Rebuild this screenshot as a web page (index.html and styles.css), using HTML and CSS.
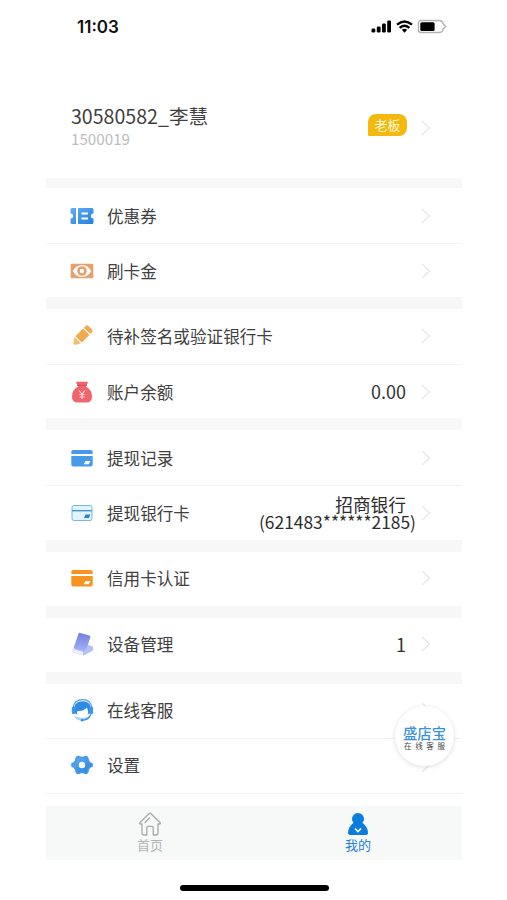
FILE: index.html
```
<!DOCTYPE html>
<html lang="zh-CN">
<head>
<meta charset="utf-8">
<title>我的</title>
<link rel="stylesheet" href="styles.css">
</head>
<body>
<svg class="defs" aria-hidden="true">
  <defs>
    <linearGradient id="blue" x1="0" y1="0" x2="1" y2="1"><stop offset="0" stop-color="#64aef5"/><stop offset="1" stop-color="#2480dc"/></linearGradient>
    <linearGradient id="violet" x1="0" y1="0" x2="0" y2="1"><stop offset="0" stop-color="#6f7fe0"/><stop offset="1" stop-color="#a5b1f5"/></linearGradient>
    <symbol id="chevron" viewBox="0 0 10 16"><path d="M1 1l7.5 7L1 15" fill="none" stroke="#e6e6e6" stroke-width="1.2"/></symbol>
  </defs>
</svg>
<header class="status">
  <span class="time">11:03</span>
  <svg class="signals" viewBox="0 0 76 16">
    <rect x="0.5" y="9.5" width="3.8" height="4" rx="1.2"/><rect x="5.8" y="7.5" width="3.8" height="6" rx="1.2"/><rect x="11" y="4.5" width="3.8" height="9" rx="1.2"/><rect x="16.2" y="1.5" width="3.8" height="12" rx="1.2"/>
    <g fill="none" stroke="#000" stroke-width="2.4"><path d="M26 5.6q7.5-6.4 15 0M28.7 8.9q4.8-4.2 9.6 0"/></g>
    <path d="M30.8 10.8q2.7-2 5.4 0L33.5 13.7z"/>
    <path d="M50 1.5h18q3.5 0 4 3.2l2.7 2.8-2.7 2.8q-.5 3.200-4 3.200H50q-2.500 0-2.500-2.500V4q0-2.500 2.500-2.500z" fill="#fff" stroke="#b2b2b2" stroke-width="1.400"/>
    <rect x="49.300" y="3.300" width="14.300" height="8.600" rx="1.500"/>
  </svg>
</header>
<main class="page">
  <section class="profile">
    <div class="who"><h1>30580582_李慧</h1><p>1500019</p></div>
    <span class="badge">老板</span>
    <svg class="chevron"><use href="#chevron"/></svg>
  </section>
  <section class="group">
    <div class="row">
      <svg class="icon" viewBox="0 0 24 24"><path d="M2 4h4v16H2q-1.500 0-1.500-1.500v-4Q3 14.500 3 12T.5 9.500v-4Q.5 4 2 4zM8 4h14q1.500 0 1.500 1.500v4Q21 9.500 21 12t2.500 2.500v4q0 1.500-1.500 1.500H8z" fill="url(#blue)"/><path d="M11.500 9.500h6.500M11.500 14.500h6.500" stroke="#fff" stroke-width="1.800"/></svg>
      <span class="label">优惠券</span><svg class="chevron"><use href="#chevron"/></svg>
    </div>
    <div class="row">
      <svg class="icon" viewBox="0 0 24 24"><rect x=".7" y="4.700" width="22.600" height="14.600" rx=".8" fill="#e5a06c"/><path d="M2.800 12Q6 6 12 6t9.200 6Q18 18 12 18t-9.200-6z" fill="#fff"/><circle cx="12" cy="12" r="3.500" fill="none" stroke="#e5a06c" stroke-width="2.600"/></svg>
      <span class="label">刷卡金</span><svg class="chevron"><use href="#chevron"/></svg>
    </div>
  </section>
  <section class="group">
    <div class="row">
      <svg class="icon" viewBox="0 0 24 24"><g transform="rotate(45 12 12)" fill="#f1aa4f"><path d="M7.500 2.300Q7.500.3 9.500.3h5q2 0 2 2v2.500h-9zM7.500 6h9v10.800h-9z"/><path d="M7.500 18h9l-3.300 5q-1.200 1.500-2.400 0z" fill="#f4bd72"/></g></svg>
      <span class="label">待补签名或验证银行卡</span><svg class="chevron"><use href="#chevron"/></svg>
    </div>
    <div class="row">
      <svg class="icon" viewBox="0 0 24 24"><path d="M6 2.500q1.300-1.700 3-.5 1.500-1.200 3 0 1.500-1.200 3 0 1.700-1.200 3 .5L15.800 6.500q6 3 6.200 10 .2 6-6 6H8q-6.200 0-6-6 .2-7 6.200-10z" fill="#f1646c"/><path d="M7 5.300h10" stroke="#c94f59"/><path d="M9 10.500l3 3.500 3-3.500M12 13.500v5.500M9.500 14.500h5M9.500 17h5" fill="none" stroke="#ffd9dc" stroke-width="1.100"/></svg>
      <span class="label">账户余额</span><span class="value">0.00</span><svg class="chevron"><use href="#chevron"/></svg>
    </div>
  </section>
  <section class="group">
    <div class="row">
      <svg class="icon" viewBox="0 0 24 24"><path d="M1.300 8V6q0-2 2-2h17.400q2 0 2 2v2zM1.300 10h21.400v8.500q0 2-2 2H3.300q-2 0-2-2z" fill="#479be8"/><path d="M15.500 15h5l-1.800 3.200h-5z" fill="#fff"/></svg>
      <span class="label">提现记录</span><svg class="chevron"><use href="#chevron"/></svg>
    </div>
    <div class="row">
      <svg class="icon" viewBox="0 0 24 24"><rect x="2" y="4.500" width="20" height="15" rx="2" fill="#dff4ff" stroke="#75b9e4"/><path d="M2 9.700h20" stroke="#4a95cb" stroke-width="1.400"/><path d="M15.500 13.500h4.800L18.800 17H14z" fill="#2f7fc0"/></svg>
      <span class="label">提现银行卡</span>
      <span class="bank"><b>招商银行</b><span class="number">(621483******2185)</span></span>
      <svg class="chevron"><use href="#chevron"/></svg>
    </div>
  </section>
  <section class="group">
    <div class="row">
      <svg class="icon" viewBox="0 0 24 24"><path d="M1.300 8V6q0-2 2-2h17.400q2 0 2 2v2zM1.300 10h21.400v8.500q0 2-2 2H3.300q-2 0-2-2z" fill="#f7931e"/><path d="M15.500 15h5l-1.800 3.200h-5z" fill="#fff"/></svg>
      <span class="label">信用卡认证</span><svg class="chevron"><use href="#chevron"/></svg>
    </div>
  </section>
  <section class="group">
    <div class="row">
      <svg class="icon" viewBox="0 0 24 24"><path d="M2 17l16-4 5 1.500v4L13.500 23.500 3 20.500z" fill="#b4c0f6"/><path d="M8.500 1.800q.5-1.200 1.800-.9l9 2.500q1.300.4 1.100 1.700L17.500 14q-.5 2.500-2.500 4l-1.500 1L3.500 16z" fill="url(#violet)"/><path d="M2 16.800l11 3v3.400L2.500 20z" fill="#edf0ff"/></svg>
      <span class="label">设备管理</span><span class="value">1</span><svg class="chevron"><use href="#chevron"/></svg>
    </div>
  </section>
  <section class="group">
    <div class="row">
      <svg class="icon" viewBox="0 0 24 24"><path d="M3.200 10Q4 1.700 12.500 1.700T21.800 10" fill="none" stroke="#4b9eea" stroke-width="1.200"/><path d="M4.500 15Q2.500 3.300 12.500 3.300T20.500 15l-3 1.500-9.500.5z" fill="#2f8be2"/><rect x="1.800" y="8.500" width="3.600" height="7.500" rx="1.500" fill="#3d96e8"/><rect x="19.500" y="8.500" width="3.600" height="7.500" rx="1.500" fill="#3d96e8"/><path d="M4.500 18q8 3 16 0-1 4-6 4.500h-4Q5.500 22 4.500 18z" fill="#a9d4f8"/><path d="M7.500 13q6 .5 9.500-3.500l1.300 4.500q-1 6-5.800 6T6.800 14.500z" fill="#fff"/><path d="M20.800 16q-1.500 5.500-8 6.200" fill="none" stroke="#2f8be2" stroke-width="1.100"/><circle cx="12" cy="22.200" r="1.200" fill="#2f8be2"/></svg>
      <span class="label">在线客服</span><svg class="chevron"><use href="#chevron"/></svg>
    </div>
    <div class="row">
      <svg class="icon" viewBox="0 0 24 24"><path d="M6.500 4.500l1.500-1 3 1h2l3-1 1.500 1L18.500 8l1.500 2 2 .8v2.400l-2 .8-1.500 2-1 3.500-1.500 1-3-1h-2l-3 1-1.500-1-1-3.500L4 14l-2-.8v-2.400L4 10l1.500-2z" fill="url(#blue)" stroke="#459ae9" stroke-width="1.600" stroke-linejoin="round"/><circle cx="12" cy="12" r="3.200" fill="#fff"/></svg>
      <span class="label">设置</span><svg class="chevron"><use href="#chevron"/></svg>
    </div>
  </section>
  <nav class="tabs">
    <a class="tab"><svg viewBox="0 0 24 24" fill="none" stroke="#a9a9a9" stroke-width="1.300" stroke-linejoin="round" stroke-linecap="round"><path d="M4 12H2.500q-1.500-.2-.5-1.500L11 1.800q1-1 2 0L22 10.500q1 1.300-.5 1.500H20v9q0 2-2 2h-2.800v-7.500q0-1.200-1.200-1.200h-4q-1.200 0-1.200 1.200V23H6q-2 0-2-2zM7 10.500L11.500 6"/></svg><span>首页</span></a>
    <a class="tab active"><svg viewBox="0 0 24 24"><circle cx="12" cy="7" r="6" fill="#0c7cdd"/><path d="M8.500 10h7q6.500 4.500 6.500 11 0 2-3 2H5q-3 0-3-2 0-6.500 6.500-11z" fill="#0c7cdd"/><path d="M9 16.500l3 3 3-3" fill="none" stroke="#fff" stroke-width="1.600"/></svg><span>我的</span></a>
  </nav>
  <aside class="service"><strong>盛店宝</strong><small>在线客服</small></aside>
</main>
<div class="home-bar"></div>
</body>
</html>
```
FILE: styles.css
```
* { box-sizing: border-box; }
body {
  margin: 0;
  height: 900px;
  overflow: hidden;
  background: #fff;
  color: #404040;
  font-family: "Noto Sans CJK SC", sans-serif;
}
.defs { position: absolute; width: 0; height: 0; }
.status {
  height: 54px;
  padding: 0 60px 0 77px;
  display: flex;
  align-items: center;
  justify-content: space-between;
}
.time { font: 600 17px/20px Inter, sans-serif; color: #111; }
.signals { width: 76px; height: 16px; }
.page { position: relative; width: 416px; margin: 0 0 0 46px; }
.profile {
  height: 124px;
  padding: 24px 31px 0 25px;
  display: flex;
  align-items: center;
}
.profile, .row { background: #fff; }
.who { flex: 1; height: 50px; }
h1 { margin: 0; font-size: 19.600px; line-height: 26px; font-weight: 400; }
.who p { margin: -1px 0 0; font-size: 15.200px; line-height: 20px; color: #bdbdbd; font-weight: 400; }
.badge {
  width: 39px;
  height: 22px;
  margin: 0 14px 6px 0;
  border-radius: 8px 8px 8px 1px;
  background: #f4b90c;
  color: #fff8df;
  font-size: 13px;
  line-height: 22px;
  text-align: center;
}
.chevron { width: 10px; height: 16px; flex: none; }
.group { border-top: 12px solid #f7f7f7; }
.profile + .group { border-top-width: 10px; }
.row {
  height: 54.600px;
  padding: 0 31px 0 24px;
  display: flex;
  align-items: center;
}
.row:only-child { height: 54px; padding-bottom: 1px; }
.group:first-of-type .row, .profile + .group .row { padding-top: 1px; }
.row + .row { border-top: 1px solid #f3f3f3; }
.group:last-of-type .row { padding-bottom: 2px; }
.icon { width: 24px; height: 24px; margin-right: 13px; }
.label { flex: 1; font-size: 16.600px; line-height: 24px; }
.value { margin-right: 15px; font-size: 18px; line-height: 24px; padding-bottom: 1px; color: #333; }
.bank {
  display: flex;
  flex-direction: column;
  align-items: flex-end;
  margin-right: 5px;
  font-size: 17.700px;
  line-height: 18px;
  color: #2d2d2d;
}
.bank b { margin-right: 10px; font-weight: 400; }
.number { font-size: 17.400px; }
.tabs {
  display: flex;
  height: 54px;
  position: relative;
  margin-top: 12.200px;
  background: #f7f8f8;
}
.group:last-of-type { border-bottom: 1px solid #f3f3f3; }
.tab {
  flex: 1;
  padding-top: 6px;
  display: flex;
  flex-direction: column;
  align-items: center;
  color: #b3b3b3;
  font-size: 13px;
  line-height: 18px;
}
.tab svg { width: 24px; height: 24px; }
.active { color: #2583d8; }
.service {
  position: absolute;
  left: 349px;
  top: 652px;
  width: 59px;
  height: 60px;
  padding-top: 19px;
  display: flex;
  flex-direction: column;
  align-items: center;
  border-radius: 50%;
  background: #fff;
  box-shadow: 0 1px 5px #0002;
}
.service strong { color: #3c91df; font-size: 14.300px; line-height: 15px; font-weight: 500; }
.service small { color: #444; font-size: 7.500px; line-height: 11px; letter-spacing: 3.700px; margin-right: -3.700px; white-space: nowrap; }
.home-bar { width: 149px; height: 6px; margin: 25px 0 0 180px; border-radius: 3px; background: #000; }
```
